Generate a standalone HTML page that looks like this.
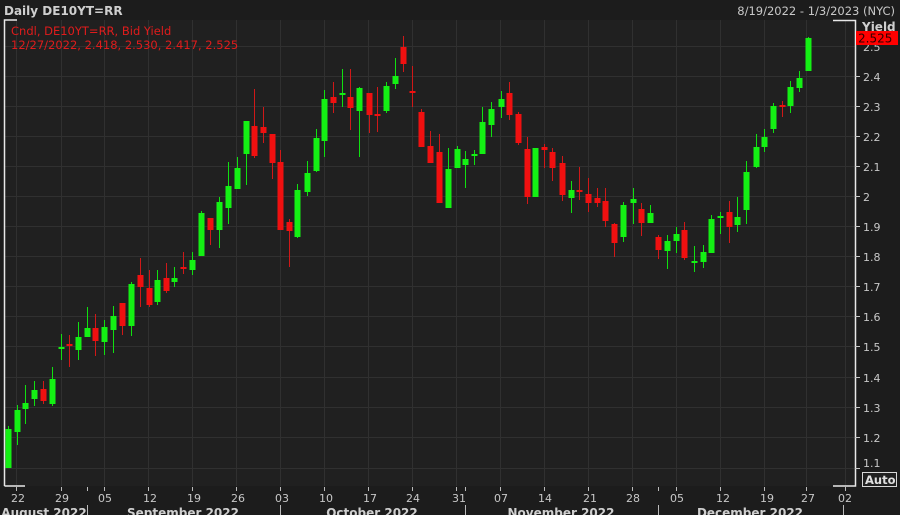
<!DOCTYPE html>
<html><head><meta charset="utf-8"><style>
html,body{margin:0;padding:0;background:#1c1c1c;width:900px;height:515px;overflow:hidden}
svg{display:block}
text{font-family:"DejaVu Sans","Liberation Sans",sans-serif}
</style></head><body>
<svg width="900" height="515" viewBox="0 0 900 515" xmlns="http://www.w3.org/2000/svg">
<rect x="0" y="0" width="900" height="515" fill="#1c1c1c"/>
<rect x="4" y="20" width="851" height="466" fill="#202020"/>
<g stroke="#303030" stroke-width="1">
<line x1="4" x2="855" y1="46.5" y2="46.5"/><line x1="4" x2="855" y1="76.5" y2="76.5"/><line x1="4" x2="855" y1="106.5" y2="106.5"/><line x1="4" x2="855" y1="136.5" y2="136.5"/><line x1="4" x2="855" y1="166.5" y2="166.5"/><line x1="4" x2="855" y1="196.5" y2="196.5"/><line x1="4" x2="855" y1="226.5" y2="226.5"/><line x1="4" x2="855" y1="256.5" y2="256.5"/><line x1="4" x2="855" y1="286.5" y2="286.5"/><line x1="4" x2="855" y1="316.5" y2="316.5"/><line x1="4" x2="855" y1="346.5" y2="346.5"/><line x1="4" x2="855" y1="377.5" y2="377.5"/><line x1="4" x2="855" y1="407.5" y2="407.5"/><line x1="4" x2="855" y1="437.5" y2="437.5"/><line x1="4" x2="855" y1="468.5" y2="468.5"/>
<line x1="16.5" x2="16.5" y1="20" y2="486"/><line x1="61.5" x2="61.5" y1="20" y2="486"/><line x1="104.5" x2="104.5" y1="20" y2="486"/><line x1="148.5" x2="148.5" y1="20" y2="486"/><line x1="192.5" x2="192.5" y1="20" y2="486"/><line x1="236.5" x2="236.5" y1="20" y2="486"/><line x1="280.5" x2="280.5" y1="20" y2="486"/><line x1="324.5" x2="324.5" y1="20" y2="486"/><line x1="368.5" x2="368.5" y1="20" y2="486"/><line x1="412.5" x2="412.5" y1="20" y2="486"/><line x1="456.5" x2="456.5" y1="20" y2="486"/><line x1="500.5" x2="500.5" y1="20" y2="486"/><line x1="544.5" x2="544.5" y1="20" y2="486"/><line x1="588.5" x2="588.5" y1="20" y2="486"/><line x1="632.5" x2="632.5" y1="20" y2="486"/><line x1="676.5" x2="676.5" y1="20" y2="486"/><line x1="720.5" x2="720.5" y1="20" y2="486"/><line x1="764.5" x2="764.5" y1="20" y2="486"/><line x1="806.5" x2="806.5" y1="20" y2="486"/><line x1="845.5" x2="845.5" y1="20" y2="486"/>
</g>
<g stroke="#e8e8e8" stroke-width="1.5" fill="none">
<path d="M4.5 486 V20 H17"/><path d="M4.5 486 H25"/><path d="M833 20.5 H855.5 V486 H833"/>
</g>
<g stroke-width="1">
<g stroke="#10e010" fill="#14f014">
<line x1="8.5" x2="8.5" y1="426" y2="468"/><rect x="5.5" y="429" width="6" height="39" stroke="none"/>
<line x1="17.5" x2="17.5" y1="405" y2="445"/><rect x="14.5" y="410" width="6" height="22" stroke="none"/>
<line x1="25.5" x2="25.5" y1="385" y2="424"/><rect x="22.5" y="403" width="6" height="6" stroke="none"/>
<line x1="34.5" x2="34.5" y1="381" y2="406"/><rect x="31.5" y="390" width="6" height="9" stroke="none"/>
<line x1="52.5" x2="52.5" y1="367" y2="406"/><rect x="49.5" y="379" width="6" height="25" stroke="none"/>
<line x1="61.5" x2="61.5" y1="334" y2="360"/><rect x="58.5" y="347" width="6" height="2" stroke="none"/>
<line x1="78.5" x2="78.5" y1="322" y2="360"/><rect x="75.5" y="337" width="6" height="13" stroke="none"/>
<line x1="87.5" x2="87.5" y1="307" y2="337"/><rect x="84.5" y="328" width="6" height="9" stroke="none"/>
<line x1="104.5" x2="104.5" y1="320" y2="355"/><rect x="101.5" y="327" width="6" height="15" stroke="none"/>
<line x1="113.5" x2="113.5" y1="306" y2="353"/><rect x="110.5" y="316" width="6" height="14" stroke="none"/>
<line x1="131.5" x2="131.5" y1="282" y2="336"/><rect x="128.5" y="284" width="6" height="42" stroke="none"/>
<line x1="157.5" x2="157.5" y1="270" y2="305"/><rect x="154.5" y="280" width="6" height="22" stroke="none"/>
<line x1="174.5" x2="174.5" y1="267" y2="287"/><rect x="171.5" y="278" width="6" height="4" stroke="none"/>
<line x1="192.5" x2="192.5" y1="252" y2="275"/><rect x="189.5" y="260" width="6" height="10" stroke="none"/>
<line x1="201.5" x2="201.5" y1="211" y2="256"/><rect x="198.5" y="213" width="6" height="43" stroke="none"/>
<line x1="219.5" x2="219.5" y1="197" y2="248"/><rect x="216.5" y="202" width="6" height="28" stroke="none"/>
<line x1="228.5" x2="228.5" y1="162" y2="224"/><rect x="225.5" y="186" width="6" height="22" stroke="none"/>
<line x1="237.5" x2="237.5" y1="157" y2="189"/><rect x="234.5" y="168" width="6" height="21" stroke="none"/>
<line x1="246.5" x2="246.5" y1="121" y2="185"/><rect x="243.5" y="121" width="6" height="33" stroke="none"/>
<line x1="297.5" x2="297.5" y1="184" y2="238"/><rect x="294.5" y="190" width="6" height="47" stroke="none"/>
<line x1="307.5" x2="307.5" y1="161" y2="196"/><rect x="304.5" y="173" width="6" height="19" stroke="none"/>
<line x1="316.5" x2="316.5" y1="129" y2="172"/><rect x="313.5" y="138" width="6" height="33" stroke="none"/>
<line x1="324.5" x2="324.5" y1="90" y2="157"/><rect x="321.5" y="99" width="6" height="42" stroke="none"/>
<line x1="342.5" x2="342.5" y1="69" y2="107"/><rect x="339.5" y="93" width="6" height="2" stroke="none"/>
<line x1="359.5" x2="359.5" y1="87" y2="157"/><rect x="356.5" y="88" width="6" height="23" stroke="none"/>
<line x1="386.5" x2="386.5" y1="82" y2="113"/><rect x="383.5" y="86" width="6" height="25" stroke="none"/>
<line x1="395.5" x2="395.5" y1="58" y2="89"/><rect x="392.5" y="76" width="6" height="8" stroke="none"/>
<line x1="448.5" x2="448.5" y1="148" y2="208"/><rect x="445.5" y="169" width="6" height="39" stroke="none"/>
<line x1="457.5" x2="457.5" y1="146" y2="168"/><rect x="454.5" y="149" width="6" height="19" stroke="none"/>
<line x1="465.5" x2="465.5" y1="151" y2="188"/><rect x="462.5" y="159" width="6" height="6" stroke="none"/>
<line x1="474.5" x2="474.5" y1="150" y2="165"/><rect x="471.5" y="154" width="6" height="2" stroke="none"/>
<line x1="482.5" x2="482.5" y1="107" y2="154"/><rect x="479.5" y="122" width="6" height="32" stroke="none"/>
<line x1="491.5" x2="491.5" y1="102" y2="137"/><rect x="488.5" y="109" width="6" height="16" stroke="none"/>
<line x1="501.5" x2="501.5" y1="91" y2="118"/><rect x="498.5" y="99" width="6" height="8" stroke="none"/>
<line x1="535.5" x2="535.5" y1="148" y2="197"/><rect x="532.5" y="148" width="6" height="49" stroke="none"/>
<line x1="571.5" x2="571.5" y1="181" y2="213"/><rect x="568.5" y="190" width="6" height="8" stroke="none"/>
<line x1="623.5" x2="623.5" y1="202" y2="242"/><rect x="620.5" y="205" width="6" height="32" stroke="none"/>
<line x1="633.5" x2="633.5" y1="188" y2="224"/><rect x="630.5" y="199" width="6" height="4" stroke="none"/>
<line x1="650.5" x2="650.5" y1="205" y2="223"/><rect x="647.5" y="213" width="6" height="10" stroke="none"/>
<line x1="667.5" x2="667.5" y1="235" y2="269"/><rect x="664.5" y="241" width="6" height="10" stroke="none"/>
<line x1="676.5" x2="676.5" y1="227" y2="253"/><rect x="673.5" y="234" width="6" height="7" stroke="none"/>
<line x1="694.5" x2="694.5" y1="246" y2="272"/><rect x="691.5" y="261" width="6" height="2" stroke="none"/>
<line x1="703.5" x2="703.5" y1="245" y2="268"/><rect x="700.5" y="252" width="6" height="10" stroke="none"/>
<line x1="711.5" x2="711.5" y1="215" y2="253"/><rect x="708.5" y="219" width="6" height="34" stroke="none"/>
<line x1="720.5" x2="720.5" y1="212" y2="234"/><rect x="717.5" y="216" width="6" height="2" stroke="none"/>
<line x1="737.5" x2="737.5" y1="197" y2="232"/><rect x="734.5" y="217" width="6" height="8" stroke="none"/>
<line x1="746.5" x2="746.5" y1="161" y2="224"/><rect x="743.5" y="172" width="6" height="38" stroke="none"/>
<line x1="756.5" x2="756.5" y1="134" y2="168"/><rect x="753.5" y="147" width="6" height="20" stroke="none"/>
<line x1="764.5" x2="764.5" y1="129" y2="152"/><rect x="761.5" y="137" width="6" height="10" stroke="none"/>
<line x1="773.5" x2="773.5" y1="103" y2="133"/><rect x="770.5" y="106" width="6" height="23" stroke="none"/>
<line x1="790.5" x2="790.5" y1="81" y2="113"/><rect x="787.5" y="87" width="6" height="19" stroke="none"/>
<line x1="799.5" x2="799.5" y1="71" y2="92"/><rect x="796.5" y="78" width="6" height="10" stroke="none"/>
<line x1="808.5" x2="808.5" y1="37" y2="71"/><rect x="805.5" y="38" width="6" height="33" stroke="none"/>
</g>
<g stroke="#d01818" fill="#f01010">
<line x1="43.5" x2="43.5" y1="381" y2="404"/><rect x="40.5" y="389" width="6" height="12" stroke="none"/>
<line x1="69.5" x2="69.5" y1="335" y2="367"/><rect x="66.5" y="344" width="6" height="2" stroke="none"/>
<line x1="95.5" x2="95.5" y1="314" y2="356"/><rect x="92.5" y="328" width="6" height="13" stroke="none"/>
<line x1="122.5" x2="122.5" y1="303" y2="335"/><rect x="119.5" y="303" width="6" height="23" stroke="none"/>
<line x1="140.5" x2="140.5" y1="258" y2="307"/><rect x="137.5" y="275" width="6" height="12" stroke="none"/>
<line x1="149.5" x2="149.5" y1="270" y2="307"/><rect x="146.5" y="288" width="6" height="17" stroke="none"/>
<line x1="166.5" x2="166.5" y1="263" y2="293"/><rect x="163.5" y="278" width="6" height="13" stroke="none"/>
<line x1="183.5" x2="183.5" y1="252" y2="274"/><rect x="180.5" y="267" width="6" height="2" stroke="none"/>
<line x1="210.5" x2="210.5" y1="218" y2="245"/><rect x="207.5" y="218" width="6" height="12" stroke="none"/>
<line x1="254.5" x2="254.5" y1="89" y2="158"/><rect x="251.5" y="126" width="6" height="30" stroke="none"/>
<line x1="263.5" x2="263.5" y1="107" y2="143"/><rect x="260.5" y="127" width="6" height="6" stroke="none"/>
<line x1="272.5" x2="272.5" y1="134" y2="179"/><rect x="269.5" y="134" width="6" height="29" stroke="none"/>
<line x1="280.5" x2="280.5" y1="150" y2="230"/><rect x="277.5" y="162" width="6" height="68" stroke="none"/>
<line x1="289.5" x2="289.5" y1="219" y2="267"/><rect x="286.5" y="222" width="6" height="9" stroke="none"/>
<line x1="333.5" x2="333.5" y1="82" y2="113"/><rect x="330.5" y="97" width="6" height="6" stroke="none"/>
<line x1="350.5" x2="350.5" y1="69" y2="130"/><rect x="347.5" y="97" width="6" height="11" stroke="none"/>
<line x1="369.5" x2="369.5" y1="93" y2="133"/><rect x="366.5" y="93" width="6" height="22" stroke="none"/>
<line x1="377.5" x2="377.5" y1="87" y2="132"/><rect x="374.5" y="114" width="6" height="2" stroke="none"/>
<line x1="403.5" x2="403.5" y1="36" y2="72"/><rect x="400.5" y="47" width="6" height="17" stroke="none"/>
<line x1="412.5" x2="412.5" y1="66" y2="107"/><rect x="409.5" y="91" width="6" height="2" stroke="none"/>
<line x1="421.5" x2="421.5" y1="109" y2="147"/><rect x="418.5" y="112" width="6" height="35" stroke="none"/>
<line x1="430.5" x2="430.5" y1="131" y2="163"/><rect x="427.5" y="146" width="6" height="17" stroke="none"/>
<line x1="439.5" x2="439.5" y1="134" y2="203"/><rect x="436.5" y="152" width="6" height="51" stroke="none"/>
<line x1="509.5" x2="509.5" y1="82" y2="120"/><rect x="506.5" y="93" width="6" height="22" stroke="none"/>
<line x1="518.5" x2="518.5" y1="112" y2="145"/><rect x="515.5" y="114" width="6" height="29" stroke="none"/>
<line x1="527.5" x2="527.5" y1="137" y2="204"/><rect x="524.5" y="149" width="6" height="48" stroke="none"/>
<line x1="544.5" x2="544.5" y1="144" y2="168"/><rect x="541.5" y="147" width="6" height="3" stroke="none"/>
<line x1="552.5" x2="552.5" y1="148" y2="181"/><rect x="549.5" y="152" width="6" height="16" stroke="none"/>
<line x1="562.5" x2="562.5" y1="156" y2="201"/><rect x="559.5" y="163" width="6" height="32" stroke="none"/>
<line x1="579.5" x2="579.5" y1="167" y2="200"/><rect x="576.5" y="190" width="6" height="2" stroke="none"/>
<line x1="588.5" x2="588.5" y1="178" y2="212"/><rect x="585.5" y="194" width="6" height="9" stroke="none"/>
<line x1="597.5" x2="597.5" y1="188" y2="207"/><rect x="594.5" y="198" width="6" height="5" stroke="none"/>
<line x1="605.5" x2="605.5" y1="188" y2="227"/><rect x="602.5" y="201" width="6" height="20" stroke="none"/>
<line x1="614.5" x2="614.5" y1="223" y2="257"/><rect x="611.5" y="224" width="6" height="19" stroke="none"/>
<line x1="641.5" x2="641.5" y1="203" y2="236"/><rect x="638.5" y="209" width="6" height="14" stroke="none"/>
<line x1="658.5" x2="658.5" y1="235" y2="259"/><rect x="655.5" y="237" width="6" height="13" stroke="none"/>
<line x1="684.5" x2="684.5" y1="222" y2="260"/><rect x="681.5" y="230" width="6" height="28" stroke="none"/>
<line x1="729.5" x2="729.5" y1="201" y2="243"/><rect x="726.5" y="212" width="6" height="15" stroke="none"/>
<line x1="782.5" x2="782.5" y1="101" y2="117"/><rect x="779.5" y="105" width="6" height="2" stroke="none"/>
</g>
</g>
<text x="4" y="15" font-size="12" font-weight="bold" fill="#cfcfcf">Daily DE10YT=RR</text>
<text x="895" y="15" font-size="11.5" fill="#c8c8c8" text-anchor="end">8/19/2022 - 1/3/2023 (NYC)</text>
<text x="11" y="35" font-size="11.5" fill="#e01c1c">Cndl, DE10YT=RR, Bid Yield</text>
<text x="11" y="49" font-size="11.5" fill="#e01c1c">12/27/2022, 2.418, 2.530, 2.417, 2.525</text>
<text x="862" y="31" font-size="12" font-weight="bold" fill="#cfcfcf">Yield</text>
<g font-size="11" fill="#c8c8c8" stroke="none">
<text x="863" y="81">2.4</text><text x="863" y="111">2.3</text><text x="863" y="141">2.2</text><text x="863" y="171">2.1</text><text x="863" y="201">2</text><text x="863" y="231">1.9</text><text x="863" y="261">1.8</text><text x="863" y="291">1.7</text><text x="863" y="321">1.6</text><text x="863" y="351">1.5</text><text x="863" y="382">1.4</text><text x="863" y="412">1.3</text><text x="863" y="442">1.2</text><text x="863" y="467">1.1</text>
<text x="863" y="51">2.5</text>
</g>
<g stroke="#c8c8c8"><line x1="855" x2="860" y1="76.5" y2="76.5"/><line x1="855" x2="860" y1="106.5" y2="106.5"/><line x1="855" x2="860" y1="136.5" y2="136.5"/><line x1="855" x2="860" y1="166.5" y2="166.5"/><line x1="855" x2="860" y1="196.5" y2="196.5"/><line x1="855" x2="860" y1="226.5" y2="226.5"/><line x1="855" x2="860" y1="256.5" y2="256.5"/><line x1="855" x2="860" y1="286.5" y2="286.5"/><line x1="855" x2="860" y1="316.5" y2="316.5"/><line x1="855" x2="860" y1="346.5" y2="346.5"/><line x1="855" x2="860" y1="377.5" y2="377.5"/><line x1="855" x2="860" y1="407.5" y2="407.5"/><line x1="855" x2="860" y1="437.5" y2="437.5"/><line x1="855" x2="860" y1="468.5" y2="468.5"/></g>
<rect x="856" y="31" width="42" height="14" fill="#ff0000"/>
<text x="858" y="42.5" font-size="12" fill="#300000">2.525</text>
<rect x="862.5" y="472.5" width="34" height="14" fill="#202020" stroke="#d8d8d8"/>
<text x="865" y="484" font-size="11.5" font-weight="bold" fill="#e0e0e0">Auto</text>
<g stroke="#bbb"><line x1="16.5" x2="16.5" y1="487" y2="491"/><line x1="61.5" x2="61.5" y1="487" y2="491"/><line x1="87.5" x2="87.5" y1="487" y2="491"/><line x1="104.5" x2="104.5" y1="487" y2="491"/><line x1="148.5" x2="148.5" y1="487" y2="491"/><line x1="192.5" x2="192.5" y1="487" y2="491"/><line x1="236.5" x2="236.5" y1="487" y2="491"/><line x1="280.5" x2="280.5" y1="487" y2="491"/><line x1="324.5" x2="324.5" y1="487" y2="491"/><line x1="368.5" x2="368.5" y1="487" y2="491"/><line x1="412.5" x2="412.5" y1="487" y2="491"/><line x1="456.5" x2="456.5" y1="487" y2="491"/><line x1="465.5" x2="465.5" y1="487" y2="491"/><line x1="500.5" x2="500.5" y1="487" y2="491"/><line x1="544.5" x2="544.5" y1="487" y2="491"/><line x1="588.5" x2="588.5" y1="487" y2="491"/><line x1="632.5" x2="632.5" y1="487" y2="491"/><line x1="658.5" x2="658.5" y1="487" y2="491"/><line x1="676.5" x2="676.5" y1="487" y2="491"/><line x1="720.5" x2="720.5" y1="487" y2="491"/><line x1="764.5" x2="764.5" y1="487" y2="491"/><line x1="806.5" x2="806.5" y1="487" y2="491"/><line x1="845.5" x2="845.5" y1="487" y2="491"/>
<line x1="87.5" x2="87.5" y1="505" y2="515"/><line x1="280.5" x2="280.5" y1="505" y2="515"/><line x1="465.5" x2="465.5" y1="505" y2="515"/><line x1="658.5" x2="658.5" y1="505" y2="515"/><line x1="843.5" x2="843.5" y1="505" y2="515"/></g>
<g font-size="11" fill="#c8c8c8" text-anchor="middle">
<text x="18" y="502">22</text><text x="62" y="502">29</text><text x="105" y="502">05</text><text x="150" y="502">12</text><text x="194" y="502">19</text><text x="238" y="502">26</text><text x="282" y="502">03</text><text x="326" y="502">10</text><text x="370" y="502">17</text><text x="413" y="502">24</text><text x="459" y="502">31</text><text x="501" y="502">07</text><text x="545" y="502">14</text><text x="590" y="502">21</text><text x="633" y="502">28</text><text x="677" y="502">05</text><text x="723" y="502">12</text><text x="767" y="502">19</text><text x="808" y="502">27</text><text x="845" y="502">02</text>
</g>
<g font-size="12" font-weight="bold" fill="#cfcfcf" text-anchor="middle">
<text x="44" y="517">August 2022</text><text x="183" y="517">September 2022</text><text x="372" y="517">October 2022</text><text x="561" y="517">November 2022</text><text x="750" y="517">December 2022</text>
</g>
</svg>
</body></html>
